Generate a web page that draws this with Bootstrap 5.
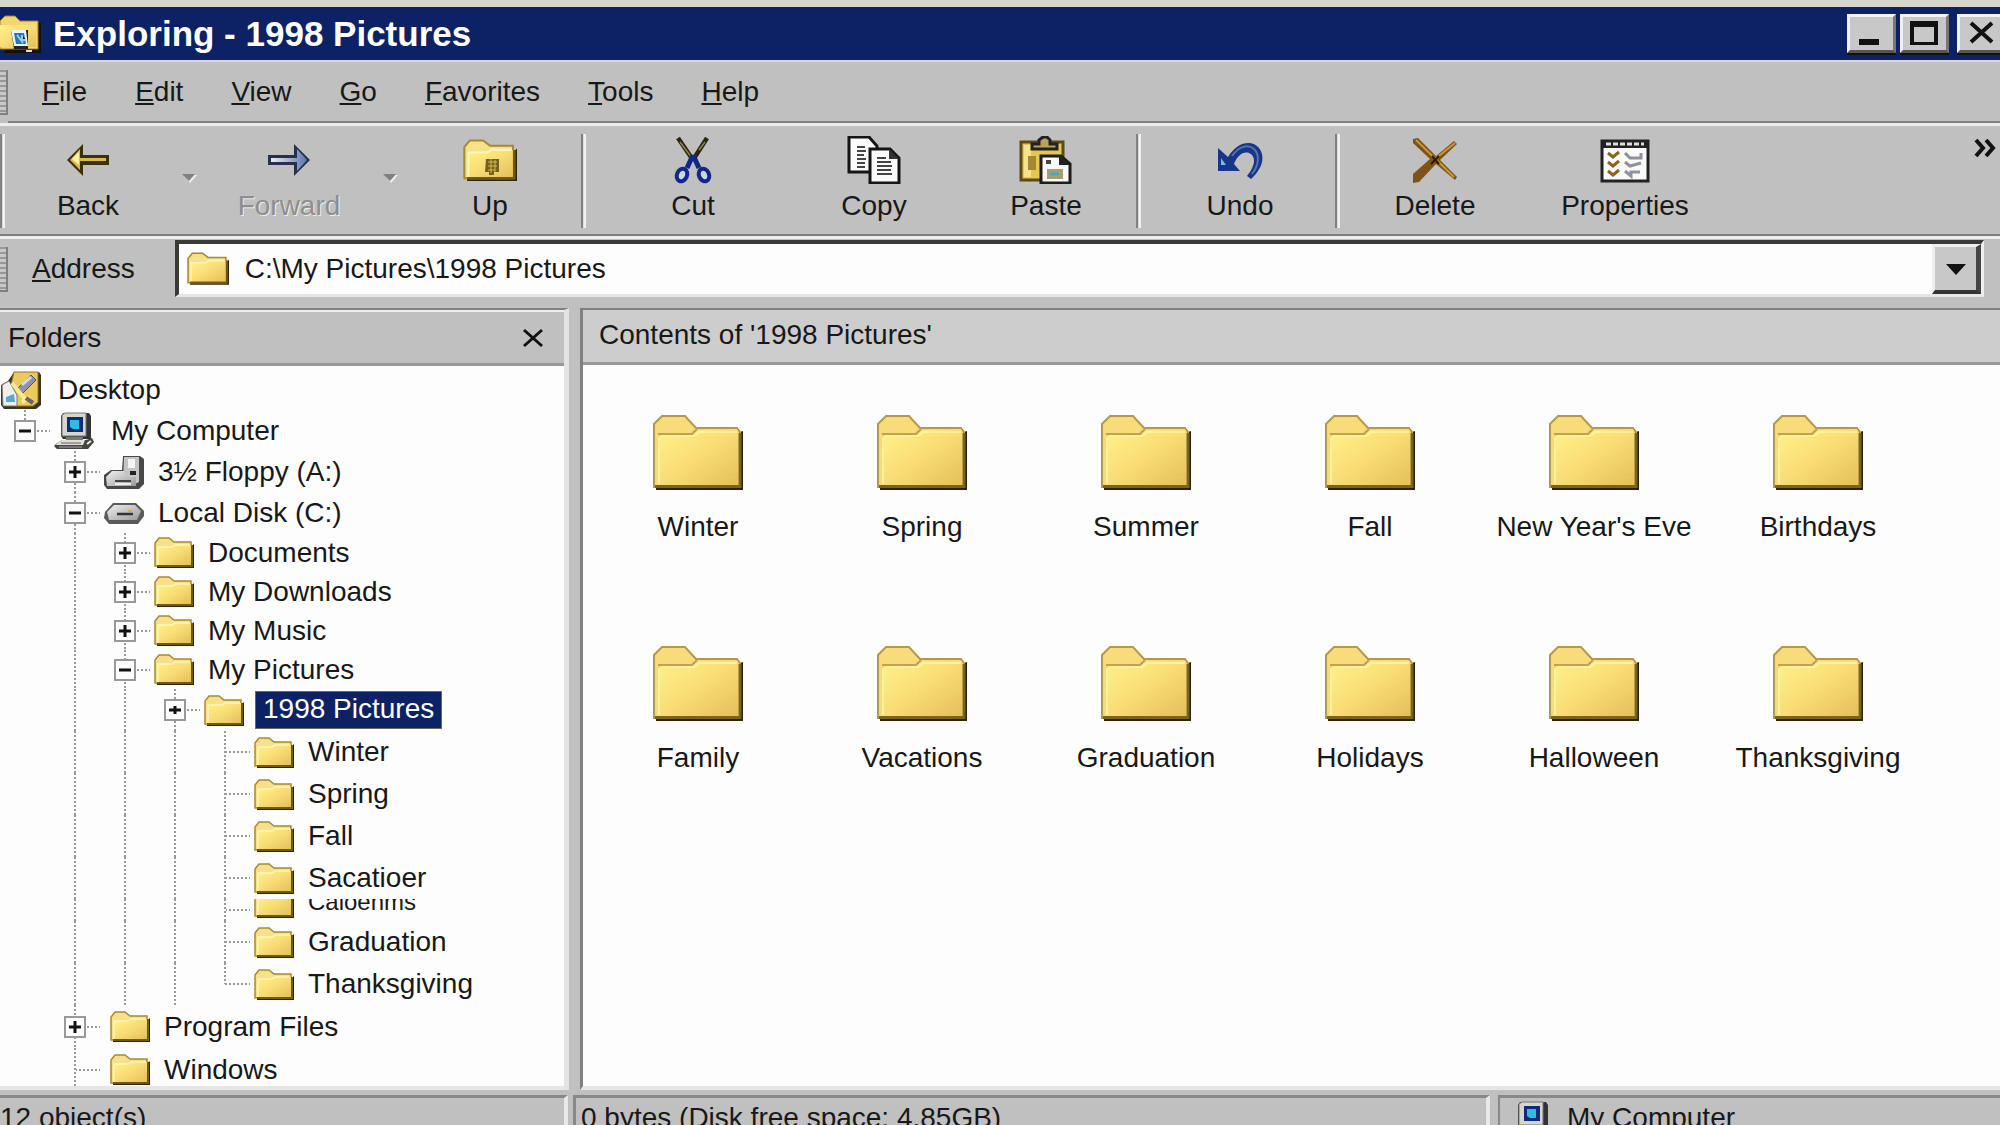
<!DOCTYPE html>
<html lang="en">
<head>
<meta charset="utf-8">
<meta name="viewport" content="width=device-width, initial-scale=1">
<title>Exploring - 1998 Pictures</title>
<link href="https://cdn.jsdelivr.net/npm/bootstrap@5.3.0/dist/css/bootstrap.min.css" rel="stylesheet">
<style>
:root{--face:#c0c0c0;--navy:#0d2264;--dark:#808080;--ink:#181818}
body{font-family:"Liberation Sans",Arial,sans-serif;font-size:28px;line-height:34px;color:var(--ink);background:var(--face);overflow:hidden}
button{color:inherit}
.shell{height:calc(100vh + 12px)}
.titlebar{height:62px;background:var(--navy);border-top:7px solid #d6d6cf;border-bottom:2px solid #d8d8e0;color:#fff}
.titlebar h1{font-size:35px;line-height:40px;font-weight:700}
.winbtn{width:49px;height:39px;background:#c8c8c8;border:3px solid;border-color:#f2f2f2 #777 #555 #f2f2f2;box-shadow:0 2px 0 #111}
.winbtns{margin-right:-6px}
.menubar{height:61px;border-bottom:2px solid var(--dark);gap:48px;padding-left:34px}
.menubar a{color:inherit;text-decoration:none}
.grip{width:8px;border:solid var(--dark);border-width:0 2px 2px 0;background:repeating-linear-gradient(#999 0 2px,#c8c8c8 2px 5px)}
.etched{border-top:3px solid #ededed}
.toolbar{height:113px;border-bottom:2px solid var(--dark)}
.tool{border:0;background:none;padding:10px 0 0;width:158px}
.tool svg{height:48px;display:block;margin:0 auto 5px}
.tool:disabled{color:#8e8e8e;text-shadow:1px 1px #eee}
.tool.mid{width:172px}.tool.wide{width:190px}
.drop{width:43px;border:0;background:none;padding-top:34px}
.more{width:30px;border:0;background:none}
.vsep{width:5px;height:94px;border-left:2px solid var(--dark);border-right:2px solid #f0f0f0;background:#ddd}
.vsep.spaced{margin-left:12px;margin-right:12px}
.addressbar{height:69px}
.addressbar label{padding-top:13px}
.combo{height:57px;margin:1px 16px 0 40px;background:#fdfdfd;border:solid;border-width:4px 3px 3px 4px;border-color:#3a3a38 #eee #e6e6e2 #3a3a38}
.combo input{background:none;border:0;outline:0;color:inherit;min-width:0}
.combo button{width:49px;background:#c8c8c8;border:solid;border-width:3px 5px 4px 3px;border-color:#eee #444 #333 #eee}
.panes{min-height:0}
.treepane{width:569px;border-top:2px solid var(--dark);border-right:5px solid #e4e4e4;border-bottom:4px solid #e6e6e6}
.panehead{height:56px;border-top:2px solid #eee;border-bottom:3px solid #999}
.tree{background:#fdfdfd;padding-top:3px;min-height:0}
.tree li{display:flex;align-items:center;height:41px;flex:none}
.tree li.l3{height:39px}
.tree li.l5,.tree li.l4{height:42px}
.tree li.root2{height:43px}
.tree li.partial{height:22px;align-items:flex-end;overflow:hidden}
.partial svg{margin-bottom:3px}
.partial .txt{align-self:flex-start;font-size:24px;line-height:6px}
.tree svg{flex:none}
.txt{margin-left:14px;white-space:nowrap}
.root .txt{margin-left:17px}
.root2>svg{margin-left:6px}
.sel{margin-left:11px;padding:0 8px;line-height:36px;height:38px;background:var(--navy);color:#fff;outline:1px solid #6b6b4b;outline-offset:-1px}
.c{width:50px;height:100%;flex:none;display:flex;align-items:center;justify-content:center;background-repeat:no-repeat}
.lead-in{margin-right:4px}
.v{background-image:repeating-linear-gradient(#999 0 2px,#fdfdfd 2px 4px);background-size:2px 100%;background-position:center}
.vh{background-image:repeating-linear-gradient(#999 0 2px,#fdfdfd 2px 4px),repeating-linear-gradient(90deg,#999 0 2px,#fdfdfd 2px 4px);background-size:2px 100%,50% 2px;background-position:center,right center}
.vh.end{background-size:2px 50%,50% 2px;background-position:center top,right center}
.box{width:22px;height:22px;padding:0;border:2px solid #999;background:#fdfdfd;display:flex}
.splitter{width:11px}
.filepane{min-width:0;border-top:2px solid var(--dark);border-left:3px solid var(--dark);border-bottom:4px solid #e6e6e6}
.filepane .panehead{height:55px;background:#cdcdcd;border-top:0;padding:8px 16px 0}
.files{background:#fdfdfd;display:grid;grid-template-columns:repeat(6,1fr);grid-auto-rows:231px;padding:50px 70px 0 3px}
.files a{color:inherit;text-decoration:none;text-align:center;white-space:nowrap}
.files svg{display:block;margin:0 auto 20px}
.status{height:42px;margin-top:5px}
.status>div{border-top:3px solid #888;padding-top:3px;white-space:nowrap}
.s1{width:568px;border-right:4px solid #e8e8e8}
.s2{margin-left:5px;border-left:3px solid #888;border-right:4px solid #e8e8e8;padding-left:5px}
.s3{width:502px;margin-left:8px;border-left:2px solid #888;padding-left:11px}
</style>
</head>
<body>
<svg width="0" height="0" class="position-absolute" aria-hidden="true">
<defs>
<linearGradient id="gold" x1="0" y1="0" x2="1" y2="1"><stop offset="0" stop-color="#fff28a"/><stop offset=".5" stop-color="#f9dc74"/><stop offset="1" stop-color="#e4bf58"/></linearGradient>
<linearGradient id="blue" x1="0" y1="0" x2="1" y2="0"><stop offset="0" stop-color="#e8ecf4"/><stop offset="1" stop-color="#5f76ae"/></linearGradient>
<linearGradient id="grey" x1="0" y1="0" x2="1" y2="1"><stop offset="0" stop-color="#f0f0f0"/><stop offset="1" stop-color="#999"/></linearGradient>
<symbol id="folder" viewBox="0 0 40 31"><path d="M3 31V10H37L40 7V31Z" fill="#2e240a"/><path d="M1 29V6L5 1H15L20 5H37V29Z" fill="#f8e08a" stroke="#a58b2d" stroke-width="1.5"/><path d="M4 10H18L21 8H37V28H4Z" fill="url(#gold)"/><path d="M4 28V10H18L21 8H36" fill="none" stroke="#fff6b8" stroke-width="1.5"/><path d="M3 29H38V8" fill="none" stroke="#735713" stroke-width="2"/></symbol>
<symbol id="bigfolder" viewBox="0 0 90 75"><path d="M3 75V70H84V18L90 16V75Z" fill="#2c2209"/><path d="M1 72V9L9 1H32L43 13H84L87 17V72Z" fill="#f8dc7c" stroke="#b3994a" stroke-width="2"/><path d="M5 71V23L9 20H40L45 15H85V71Z" fill="url(#gold)"/><path d="M5 19H39L44 14" fill="none" stroke="#c2a24a" stroke-width="2"/><path d="M6 69V24L10 21H41L46 17H84" fill="none" stroke="#fff3a0" stroke-width="2"/><path d="M2 71.500H87V18" fill="none" stroke="#7d621c" stroke-width="3"/></symbol>
<symbol id="computer" viewBox="0 0 40 38"><path d="M9 1H35L37 4V27H9L7 24V4Z" fill="#333"/><path d="M8 3L11 1H32V24H8Z" fill="#d6d6cc" stroke="#777"/><path d="M13 5H29V20H13Z" fill="#102a7a"/><path d="M16 8H25V17H19L16 15Z" fill="#2bbde3"/><path d="M12 25H29V28H12Z" fill="#777"/><path d="M3 31L8 28H32L38 26L40 30L34 37H3L0 34Z" fill="#444"/><path d="M3 31L8 28H31L29 33H2Z" fill="#e0e0d6"/><path d="M7 31H27M5 35H28" stroke="#888" stroke-width="1.500"/><path d="M33 32L37 29" stroke="#eee" stroke-width="2"/></symbol>
</defs>
</svg>

<div class="shell d-flex flex-column">
<header class="titlebar d-flex align-items-center flex-shrink-0">
<svg width="41" height="38" viewBox="0 0 41 38" aria-hidden="true"><path d="M3 38H41V8H36Z" fill="#151008"/><path d="M0 34V6L5 1H15L20 6H38V34Z" fill="#f5d66c" stroke="#98802c"/><path d="M0 10H36V32H0Z" fill="url(#gold)"/><path d="M11 15H28V34H14Z" fill="#222"/><path d="M11 15H26L28 31H14Z" fill="#eef3f7"/><path d="M14 18H24L26 29H16Z" fill="#2a74b8"/><path d="M17 20L23 28M22 20V25H26" stroke="#8ed2ee" stroke-width="2"/><path d="M26 36H32" stroke="#ddd" stroke-width="2"/></svg>
<h1 class="m-0 ms-2 ps-1 flex-grow-1">Exploring - 1998 Pictures</h1>
<div class="winbtns d-flex">
<button class="winbtn p-0 d-flex" aria-label="Minimize"><svg width="43" height="32" viewBox="0 0 43 32"><path d="M9 22H29V28H9Z" fill="#111"/></svg></button>
<button class="winbtn p-0 d-flex ms-1" aria-label="Maximize"><svg width="43" height="32" viewBox="0 0 43 32"><path d="M7 4H35V28H7ZM11 10V25H31V10Z" fill="#111" fill-rule="evenodd"/></svg></button>
<button class="winbtn p-0 d-flex ms-2" aria-label="Close"><svg width="43" height="32" viewBox="0 0 43 32"><path d="M11 6L32 25M32 6L11 25" stroke="#111" stroke-width="4"/></svg></button>
</div>
</header>

<div class="d-flex flex-shrink-0">
<span class="grip my-2"></span>
<nav class="menubar d-flex align-items-center flex-grow-1" aria-label="Menu">
<a href="#"><u>F</u>ile</a><a href="#"><u>E</u>dit</a><a href="#"><u>V</u>iew</a><a href="#"><u>G</u>o</a><a href="#"><u>F</u>avorites</a><a href="#"><u>T</u>ools</a><a href="#"><u>H</u>elp</a>
</nav>
</div>

<div class="toolbar etched d-flex align-items-start flex-shrink-0">
<span class="vsep mt-2 me-1"></span>
<button class="tool"><svg width="44" viewBox="0 0 44 48"><path d="M1 24L17 8V19H43V29H17V40Z" fill="#3c300e"/><path d="M4 24L14 13V22H40V25H14V34Z" fill="#d9bd4c"/><path d="M6 23L13 16V29Z" fill="#fff2a0"/></svg>Back</button>
<button class="drop" aria-label="Back history"><svg width="16" height="9" viewBox="0 0 16 9"><path d="M3 1H16L9 9Z" fill="#eee"/><path d="M1 0H14L8 7Z" fill="#808080"/></svg></button>
<button class="tool" disabled><svg width="44" viewBox="0 0 44 48"><path d="M43 24L27 8V19H1V29H27V40Z" fill="#26304e"/><path d="M40 24L30 13V22H4V26H30V35Z" fill="url(#blue)"/></svg>Forward</button>
<button class="drop" aria-label="Forward history"><svg width="16" height="9" viewBox="0 0 16 9"><path d="M3 1H16L9 9Z" fill="#eee"/><path d="M1 0H14L8 7Z" fill="#808080"/></svg></button>
<button class="tool"><svg width="54" viewBox="0 0 54 48"><use href="#folder" x="0" y="3" width="54" height="42"/><path d="M23 23H36V36H31V39H26V36H22Z" fill="#75601c"/><path d="M25 26H34M25 30H34M25 34H32M28 23V37M32 24V36" stroke="#d4b850"/></svg>Up</button>
<span class="vsep spaced mt-2"></span>
<button class="tool wide"><svg width="40" viewBox="0 0 40 48"><path d="M5 2L20 24M34 2L20 24" stroke="#2a2610" stroke-width="4.500"/><path d="M7 6L19 22M32 6L26 14" stroke="#8e8154" stroke-width="1.500"/><path d="M20 19L14 32M20 19L26 32" stroke="#0f2a86" stroke-width="5"/><ellipse cx="9" cy="39" rx="5" ry="6.500" transform="rotate(25 9 39)" fill="#cfd6ea" stroke="#0f2a86" stroke-width="4"/><ellipse cx="31" cy="39" rx="5" ry="6.500" transform="rotate(-25 31 39)" fill="#cfd6ea" stroke="#0f2a86" stroke-width="4"/></svg>Cut</button>
<button class="tool mid"><svg width="54" viewBox="0 0 54 48"><path d="M2 1H22L30 10V36H2Z" fill="#fbfbfb" stroke="#151515" stroke-width="3"/><path d="M10 11H18M10 15H19M10 19H17M10 23H19M10 27H18M10 31H18" stroke="#444" stroke-width="2"/><path d="M23 13H43L52 22V47H23Z" fill="#fbfbfb" stroke="#151515" stroke-width="3"/><path d="M42 13V23H52Z" fill="#333"/><path d="M30 22H39M30 26H44M30 30H45M30 34H44M30 38H45" stroke="#444" stroke-width="2"/></svg>Copy</button>
<button class="tool mid"><svg width="54" viewBox="0 0 54 48"><path d="M2 6H44V44H2Z" fill="#e4c650" stroke="#5c4b12" stroke-width="3"/><path d="M5 9H12V41H5Z" fill="#f6e38b"/><path d="M9 20H17V34H9Z" fill="#a58932"/><path d="M13 13V8H20V4L24 1H28L31 4V8H38V13Z" fill="#b8a35a" stroke="#222" stroke-width="3"/><path d="M22 20H42L51 28V47H22Z" fill="#fafafa" stroke="#1d1d1d" stroke-width="3"/><path d="M40 19V29H51Z" fill="#222"/><path d="M27 24H32V28H27Z" fill="#444"/><path d="M28 33H44V43H28Z" fill="#a8a068"/><path d="M31 38H40" stroke="#55a4c0" stroke-width="3"/></svg>Paste</button>
<span class="vsep mt-2 mx-1"></span>
<button class="tool wide"><svg width="48" viewBox="0 0 48 48"><path d="M2 12V35H24L18 28C21 20 27 15 33 17C40 20 40 29 31 40L35 43C46 33 50 21 43 12C36 4 22 5 12 21Z" fill="#173689"/><path d="M16 20C23 10 32 8 38 13C44 19 43 29 36 38" fill="none" stroke="#5871ac" stroke-width="2"/><path d="M5 22L10 29H5Z" fill="#6cc0e0"/></svg>Undo</button>
<span class="vsep mt-2"></span>
<button class="tool wide"><svg width="48" viewBox="0 0 48 48"><path d="M2 3L7 2L25 20L43 5L46 8L29 24L46 41L44 44L25 28L8 46L2 47V38L19 23L2 7Z" fill="#805216"/><path d="M5 4L43 41M44 7L24 23" stroke="#c49a34" stroke-width="2"/><path d="M21 20L28 28M28 20L20 28" stroke="#2b1b05" stroke-width="2"/></svg>Delete</button>
<button class="tool wide"><svg width="50" viewBox="0 0 50 48"><path d="M2 5H48V45H2Z" fill="#fafafa" stroke="#222" stroke-width="3"/><path d="M2 4H48V12H2Z" fill="#222"/><path d="M6 8H44" stroke="#ddd" stroke-width="3" stroke-dasharray="5 2"/><path d="M8 17L13 21L19 16M8 26L13 30L19 25M8 35L13 39L19 34" fill="none" stroke="#8a651c" stroke-width="3"/><path d="M25 17L30 22H41V17M25 26L30 30L41 27M25 35L31 40V36H40" fill="none" stroke="#8e929d" stroke-width="3"/></svg>Properties</button>
<button class="more ms-auto mt-1 p-0" aria-label="More"><svg width="22" height="22" viewBox="0 0 22 22"><path d="M2 2L9 10L2 18M12 2L19 10L12 18" fill="none" stroke="#111" stroke-width="4"/></svg></button>
</div>

<div class="etched d-flex flex-shrink-0">
<span class="grip mt-2 mb-3"></span>
<div class="addressbar d-flex align-items-start flex-grow-1 ps-4">
<label for="address"><u>A</u>ddress</label>
<div class="combo d-flex flex-grow-1">
<svg class="ms-2 mt-2 flex-shrink-0" width="42" height="33"><use href="#folder"/></svg>
<input id="address" class="flex-grow-1 p-0 ps-3" type="text" value="C:\My Pictures\1998 Pictures">
<button aria-label="Show addresses"><svg width="20" height="12" viewBox="0 0 20 12" class="d-block m-auto"><path d="M0 1H20L10 12Z" fill="#111"/></svg></button>
</div>
</div>
</div>

<main class="panes d-flex flex-grow-1">
<section class="treepane d-flex flex-column flex-shrink-0">
<div class="panehead d-flex align-items-center justify-content-between ps-2 pe-3 flex-shrink-0"><span>Folders</span><button class="border-0 bg-transparent p-0 d-flex me-1" aria-label="Close folders"><svg width="22" height="20" viewBox="0 0 22 20"><path d="M2 2L20 18M20 2L2 18" stroke="#111" stroke-width="3"/></svg></button></div>
<ul class="tree list-unstyled m-0 flex-grow-1 d-flex flex-column overflow-hidden">
<li class="root"><svg width="41" height="38" viewBox="0 0 41 38"><path d="M14 1H39L41 4V34L36 38H4L1 34V14L8 10Z" fill="#3b351b"/><path d="M14 1H38V31L33 35H16L11 14Z" fill="#ecc95c" stroke="#8f7628"/><path d="M2 14L9 10L17 24V35H3Z" fill="#f0f0ea" stroke="#777"/><path d="M18 17L31 4L36 9L23 22Z" fill="#8c93a8" stroke="#555"/><path d="M22 14L31 6" stroke="#d6dae4" stroke-width="3"/><path d="M12 12L26 29M30 26L22 31" stroke="#f7e89a" stroke-width="4"/><path d="M26 27L33 32" stroke="#666" stroke-width="4"/><path d="M6 26L14 23L15 31H6Z" fill="#57a9cf"/></svg><span class="txt">Desktop</span></li>
<li class="root"><span class="c vh end lead-in"><button class="box" aria-label="Collapse"><svg viewBox="0 0 18 18"><path d="M3 9H15" stroke="#111" stroke-width="3"/></svg></button></span><svg width="40" height="38"><use href="#computer"/></svg><span class="txt">My Computer</span></li>
<li><span class="c"></span><span class="c vh lead-in"><button class="box" aria-label="Expand"><svg viewBox="0 0 18 18"><path d="M3 9H15M9 3V15" stroke="#111" stroke-width="3"/></svg></button></span><svg width="40" height="34" viewBox="0 0 40 34"><path d="M19 1H36L40 4V29L35 34H3L0 30V20L7 15H18Z" fill="#484848"/><path d="M20 2H35V27L31 29H19Z" fill="#c4c4c4"/><path d="M24 4H31V13H24Z" fill="#f4f4f4"/><path d="M26 16H32V20H26Z" fill="#222"/><path d="M2 22L8 16H20L23 22H32V31H3Z" fill="url(#grey)"/><path d="M11 26H27" stroke="#444" stroke-width="2"/><path d="M11 29H27" stroke="#eee" stroke-width="2"/></svg><span class="txt">3½ Floppy (A:)</span></li>
<li><span class="c"></span><span class="c vh lead-in"><button class="box" aria-label="Collapse"><svg viewBox="0 0 18 18"><path d="M3 9H15" stroke="#111" stroke-width="3"/></svg></button></span><svg width="40" height="22" viewBox="0 0 40 22"><path d="M1 10L9 1H32L40 9V14L34 22H5L0 16Z" fill="#5a5a5a"/><path d="M3 10L10 3H31L37 9L33 18H5Z" fill="url(#grey)"/><path d="M13 12H29" stroke="#333" stroke-width="2.500"/><path d="M24 9H28" stroke="#d0b050" stroke-width="2"/></svg><span class="txt">Local Disk (C:)</span></li>
<li class="l3"><span class="c"></span><span class="c v"></span><span class="c vh lead-in"><button class="box" aria-label="Expand"><svg viewBox="0 0 18 18"><path d="M3 9H15M9 3V15" stroke="#111" stroke-width="3"/></svg></button></span><svg width="40" height="31"><use href="#folder"/></svg><span class="txt">Documents</span></li>
<li class="l3"><span class="c"></span><span class="c v"></span><span class="c vh lead-in"><button class="box" aria-label="Expand"><svg viewBox="0 0 18 18"><path d="M3 9H15M9 3V15" stroke="#111" stroke-width="3"/></svg></button></span><svg width="40" height="31"><use href="#folder"/></svg><span class="txt">My Downloads</span></li>
<li class="l3"><span class="c"></span><span class="c v"></span><span class="c vh lead-in"><button class="box" aria-label="Expand"><svg viewBox="0 0 18 18"><path d="M3 9H15M9 3V15" stroke="#111" stroke-width="3"/></svg></button></span><svg width="40" height="31"><use href="#folder"/></svg><span class="txt">My Music</span></li>
<li class="l3"><span class="c"></span><span class="c v"></span><span class="c vh lead-in"><button class="box" aria-label="Collapse"><svg viewBox="0 0 18 18"><path d="M3 9H15" stroke="#111" stroke-width="3"/></svg></button></span><svg width="40" height="31"><use href="#folder"/></svg><span class="txt">My Pictures</span></li>
<li class="l4"><span class="c"></span><span class="c v"></span><span class="c v"></span><span class="c vh lead-in"><button class="box" aria-label="Expand"><svg viewBox="0 0 18 18"><path d="M3 9H15M9 5V13" stroke="#111" stroke-width="3"/></svg></button></span><svg width="40" height="31"><use href="#folder"/></svg><span class="sel">1998 Pictures</span></li>
<li class="l5"><span class="c"></span><span class="c v"></span><span class="c v"></span><span class="c v"></span><span class="c vh lead-in"></span><svg width="40" height="31"><use href="#folder"/></svg><span class="txt">Winter</span></li>
<li class="l5"><span class="c"></span><span class="c v"></span><span class="c v"></span><span class="c v"></span><span class="c vh lead-in"></span><svg width="40" height="31"><use href="#folder"/></svg><span class="txt">Spring</span></li>
<li class="l5"><span class="c"></span><span class="c v"></span><span class="c v"></span><span class="c v"></span><span class="c vh lead-in"></span><svg width="40" height="31"><use href="#folder"/></svg><span class="txt">Fall</span></li>
<li class="l5"><span class="c"></span><span class="c v"></span><span class="c v"></span><span class="c v"></span><span class="c vh lead-in"></span><svg width="40" height="31"><use href="#folder"/></svg><span class="txt">Sacatioer</span></li>
<li class="partial"><span class="c"></span><span class="c v"></span><span class="c v"></span><span class="c v"></span><span class="c vh lead-in"></span><svg width="40" height="31"><use href="#folder"/></svg><span class="txt">Caloenms</span></li>
<li class="l5"><span class="c"></span><span class="c v"></span><span class="c v"></span><span class="c v"></span><span class="c vh lead-in"></span><svg width="40" height="31"><use href="#folder"/></svg><span class="txt">Graduation</span></li>
<li class="l5"><span class="c"></span><span class="c v"></span><span class="c v"></span><span class="c v"></span><span class="c vh end lead-in"></span><svg width="40" height="31"><use href="#folder"/></svg><span class="txt">Thanksgiving</span></li>
<li class="root2"><span class="c"></span><span class="c vh lead-in"><button class="box" aria-label="Expand"><svg viewBox="0 0 18 18"><path d="M3 9H15M9 3V15" stroke="#111" stroke-width="3"/></svg></button></span><svg width="40" height="31"><use href="#folder"/></svg><span class="txt">Program Files</span></li>
<li class="root2"><span class="c"></span><span class="c vh lead-in"></span><svg width="40" height="31"><use href="#folder"/></svg><span class="txt">Windows</span></li>
</ul>
</section>
<div class="splitter flex-shrink-0"></div>
<section class="filepane d-flex flex-column flex-grow-1">
<div class="panehead flex-shrink-0">Contents of '1998 Pictures'</div>
<div class="files flex-grow-1">
<a href="#"><svg width="90" height="75"><use href="#bigfolder"/></svg>Winter</a>
<a href="#"><svg width="90" height="75"><use href="#bigfolder"/></svg>Spring</a>
<a href="#"><svg width="90" height="75"><use href="#bigfolder"/></svg>Summer</a>
<a href="#"><svg width="90" height="75"><use href="#bigfolder"/></svg>Fall</a>
<a href="#"><svg width="90" height="75"><use href="#bigfolder"/></svg>New Year's Eve</a>
<a href="#"><svg width="90" height="75"><use href="#bigfolder"/></svg>Birthdays</a>
<a href="#"><svg width="90" height="75"><use href="#bigfolder"/></svg>Family</a>
<a href="#"><svg width="90" height="75"><use href="#bigfolder"/></svg>Vacations</a>
<a href="#"><svg width="90" height="75"><use href="#bigfolder"/></svg>Graduation</a>
<a href="#"><svg width="90" height="75"><use href="#bigfolder"/></svg>Holidays</a>
<a href="#"><svg width="90" height="75"><use href="#bigfolder"/></svg>Halloween</a>
<a href="#"><svg width="90" height="75"><use href="#bigfolder"/></svg>Thanksgiving</a>
</div>
</section>
</main>

<footer class="status d-flex flex-shrink-0">
<div class="s1 flex-shrink-0">12 object(s)</div>
<div class="s2 flex-grow-1">0 bytes (Disk free space: 4.85GB)</div>
<div class="s3 flex-shrink-0 d-flex align-items-start"><svg width="40" height="38" class="flex-shrink-0"><use href="#computer"/></svg><span class="ms-3">My Computer</span></div>
</footer>
</div>
<script src="https://cdn.jsdelivr.net/npm/bootstrap@5.3.0/dist/js/bootstrap.bundle.min.js"></script>
</body>
</html>
